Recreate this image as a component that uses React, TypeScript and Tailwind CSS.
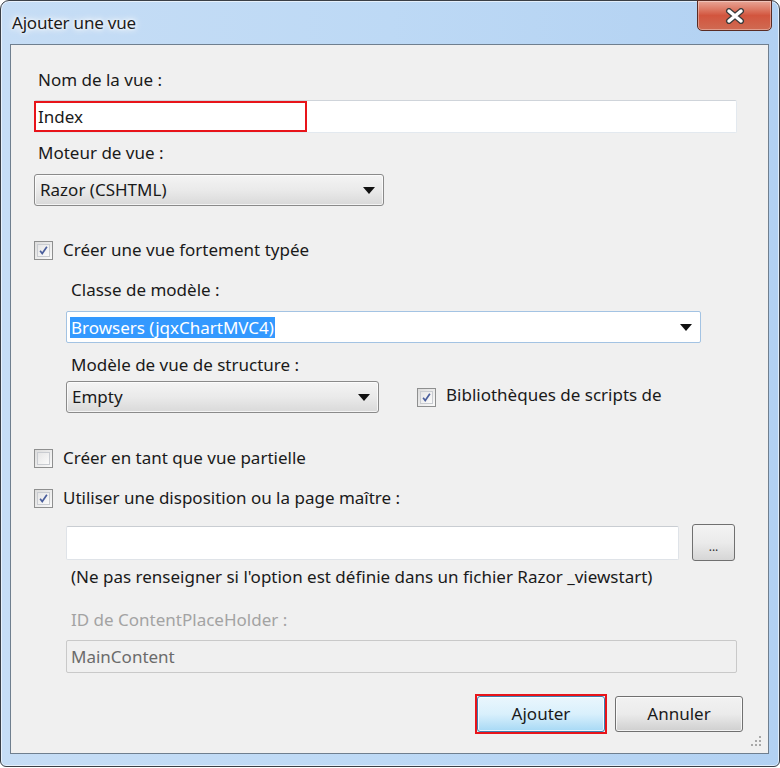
import { clsx } from 'clsx'

const font = { fontFamily: '"Noto Sans", "Open Sans", sans-serif' }

export default function App() {
  return (
    <div className="w-[780px] h-[768px] bg-white" style={font}>
      <div className="relative w-[780px] h-[767px] rounded-t-[9px] rounded-b-[6px] border border-[#3a3f46] bg-gradient-to-r from-[#c6ddf5] via-[#bdd9f5] to-[#b2d1f2] shadow-[inset_0_0_0_1px_rgba(255,255,255,0.6)]">
        {/* Title bar */}
        <div className="h-[43px] flex items-center pl-[11px]">
          <span className="text-[17px] text-[#1b1b1b] tracking-[-0.2px] [text-shadow:0_0_10px_#fff,0_0_6px_#fff,0_0_3px_#fff]">Ajouter une vue</span>
        </div>
        <CloseButton />

        {/* Client area */}
        <div className="ml-[9px] w-[759px] h-[710px] border border-[#6f7f8f] bg-[#f0f0f0] pl-[23px] pr-[30px] flex flex-col text-[17px] text-[#1a1a1a]">
          <Label className="mt-[24px] pl-[4px]">Nom de la vue :</Label>

          <div className="relative mt-[9px]">
            <TextBox>Index</TextBox>
            <div className="absolute left-0 top-[1px] w-[273px] h-[31px] border-2 border-[#e8141a]" />
          </div>

          <Label className="mt-[9px] pl-[4px]">Moteur de vue :</Label>
          <DropDown className="mt-[10px] w-[350px]">Razor (CSHTML)</DropDown>

          <CheckRow className="mt-[33px]" checked>Créer une vue fortement typée</CheckRow>

          <div className="pl-[32px] flex flex-col">
            <Label className="mt-[18px] pl-[5px]">Classe de modèle :</Label>
            <div className="mt-[10px] w-[635px] h-[32px] bg-white border border-[#a3c3e3] rounded-[2px] flex items-center pl-[3px] pr-[8px]">
              <span className="bg-[#3399ff] text-white leading-[21px] px-[1px]">Browsers (jqxChartMVC4)</span>
              <span className="ml-auto">
                <Arrow />
              </span>
            </div>

            <Label className="mt-[11px] pl-[5px]">Modèle de vue de structure :</Label>
            <div className="mt-[5px] flex items-center">
              <DropDown className="w-[313px]">Empty</DropDown>
              <div className="ml-[38px] flex items-start h-[32px] pt-[3px]">
                <CheckBox checked className="mt-[4px]" />
                <span className="ml-[10px] leading-[22px]">Bibliothèques de scripts de</span>
              </div>
            </div>
          </div>

          <CheckRow className="mt-[34px]">Créer en tant que vue partielle</CheckRow>
          <CheckRow className="mt-[18px]" checked>Utiliser une disposition ou la page maître :</CheckRow>

          <div className="pl-[32px] flex flex-col">
            <div className="mt-[15px] h-[37px] flex items-center">
              <div className="w-[613px] h-[34px] bg-white border border-[#dfe3e8] border-t-[#c9cdd2] rounded-[2px]" />
              <button className="ml-[13px] w-[43px] h-[37px] rounded-[3px] border border-[#707070] bg-gradient-to-b from-[#f3f3f3] via-[#ebebeb] to-[#d6d6d6] text-[12px] leading-none pt-[8px] text-[#333]">
                ...
              </button>
            </div>
            <div className="mt-[5px] h-[22px] leading-[22px] pl-[5px] whitespace-nowrap">
              (Ne pas renseigner si l'option est définie dans un fichier Razor _viewstart)
            </div>
            <Label className="mt-[21px] pl-[5px] text-[#a3a3a3]">ID de ContentPlaceHolder :</Label>
            <div className="mt-[9px] w-[671px] h-[33px] border border-[#c9c9c9] rounded-[2px] bg-[#f0f0f0] flex items-center pl-[4px] text-[#6b6b6b]">
              MainContent
            </div>
          </div>

          <div className="mt-[23px] flex justify-end mr-[-5px]">
            <div className="relative">
              <WinButton primary>Ajouter</WinButton>
              <div className="absolute -left-[2px] -top-[2px] w-[132px] h-[40px] border-2 border-[#e8141a]" />
            </div>
            <WinButton className="ml-[10px]">Annuler</WinButton>
          </div>

          <div className="mt-auto mb-[6px] mr-[-24px] self-end">
            <Grip />
          </div>
        </div>
      </div>
    </div>
  )
}

function Label({ children, className }: { children: React.ReactNode; className?: string }) {
  return <div className={clsx('h-[22px] leading-[22px]', className)}>{children}</div>
}

function TextBox({ children }: { children?: React.ReactNode }) {
  return (
    <div className="w-[703px] h-[33px] bg-white border border-[#e3e9ef] border-t-[#cfd4da] rounded-[2px] flex items-center pl-[3px]">
      {children}
    </div>
  )
}

function DropDown({ children, className }: { children: React.ReactNode; className?: string }) {
  return (
    <div
      className={clsx(
        'h-[32px] rounded-[3px] border border-[#8a8a8a] bg-gradient-to-b from-[#f4f4f4] via-[#eaeaea] to-[#d9d9d9] flex items-center pl-[5px] pr-[8px] shadow-[inset_0_0_0_1px_rgba(255,255,255,0.7)]',
        className
      )}
    >
      <span>{children}</span>
      <span className="ml-auto">
        <Arrow />
      </span>
    </div>
  )
}

function Arrow() {
  return (
    <svg width="12" height="7" viewBox="0 0 12 7" className="block">
      <path d="M0 0h12L6 7z" fill="#111" />
    </svg>
  )
}

function CheckBox({ checked, className }: { checked?: boolean; className?: string }) {
  return (
    <div
      className={clsx(
        'w-[19px] h-[19px] border border-[#8e8f8f] bg-gradient-to-br from-[#dcdcdc] to-[#fafafa] p-[2px] shrink-0',
        className
      )}
    >
      <div className="w-full h-full border border-[#c9ccd1] bg-gradient-to-br from-[#e6e6e6] to-[#fbfbfb] relative">
        {checked && (
          <svg viewBox="0 0 13 13" className="absolute inset-0 w-full h-full">
            <path d="M2.5 6.8 L5 10 L10.5 2.2" fill="none" stroke="#4a5e9c" strokeWidth="2" />
          </svg>
        )}
      </div>
    </div>
  )
}

function CheckRow({ children, checked, className }: { children: React.ReactNode; checked?: boolean; className?: string }) {
  return (
    <div className={clsx('h-[22px] flex items-center', className)}>
      <CheckBox checked={checked} />
      <span className="ml-[10px] leading-[22px]">{children}</span>
    </div>
  )
}

function WinButton({ children, primary, className }: { children: React.ReactNode; primary?: boolean; className?: string }) {
  return (
    <button
      className={clsx(
        'w-[128px] h-[36px] rounded-[3px] border text-[17px] text-[#1a1a1a] shadow-[inset_0_0_0_1px_rgba(255,255,255,0.75)]',
        primary
          ? 'border-[#3c7fb1] bg-gradient-to-b from-[#eaf6fd] via-[#d9f0fc] to-[#a7d9f5]'
          : 'border-[#707070] bg-gradient-to-b from-[#f2f2f2] via-[#ebebeb] to-[#cfcfcf]',
        className
      )}
    >
      {children}
    </button>
  )
}

function CloseButton() {
  return (
    <div className="absolute right-[7px] top-[-1px] w-[75px] h-[31px] rounded-b-[5px] border border-[#5a2c24] bg-gradient-to-b from-[#e7a596] via-[#d2553e] to-[#cf6a52] flex items-center justify-center shadow-[inset_0_0_0_1px_rgba(255,255,255,0.35)]">
      <svg width="22" height="16" viewBox="0 0 22 16">
        <path d="M5 3 L17 13 M17 3 L5 13" stroke="#3b3b3b" strokeWidth="6" strokeLinecap="round" />
        <path d="M5 3 L17 13 M17 3 L5 13" stroke="#ffffff" strokeWidth="3.5" strokeLinecap="round" />
      </svg>
    </div>
  )
}

function Grip() {
  const dots = [
    [8, 0],
    [4, 4],
    [8, 4],
    [0, 8],
    [4, 8],
    [8, 8],
  ]
  return (
    <svg width="11" height="11" viewBox="0 0 11 11" className="block">
      {dots.map(([x, y]) => (
        <rect key={`${x}-${y}`} x={x} y={y} width="2" height="2" fill="#a8a8a8" />
      ))}
    </svg>
  )
}
